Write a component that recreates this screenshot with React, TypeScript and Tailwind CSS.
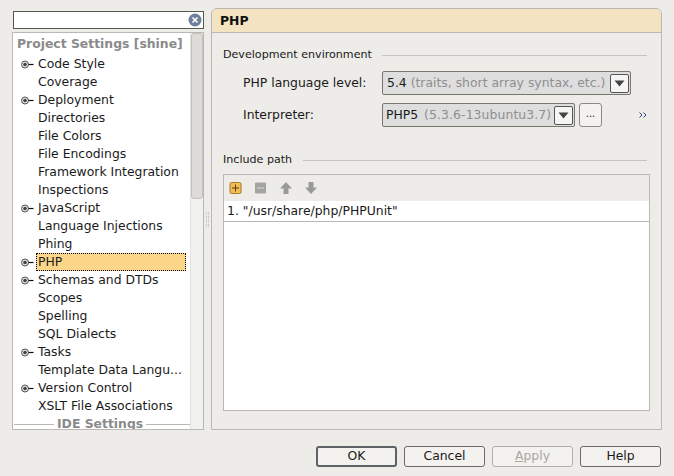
import React from 'react'

const items: [string, boolean][] = [
  ['Code Style', true],
  ['Coverage', false],
  ['Deployment', true],
  ['Directories', false],
  ['File Colors', false],
  ['File Encodings', false],
  ['Framework Integration', false],
  ['Inspections', false],
  ['JavaScript', true],
  ['Language Injections', false],
  ['Phing', false],
  ['PHP', true],
  ['Schemas and DTDs', true],
  ['Scopes', false],
  ['Spelling', false],
  ['SQL Dialects', false],
  ['Tasks', true],
  ['Template Data Langu...', false],
  ['Version Control', true],
  ['XSLT File Associations', false],
]

const Expander = () => (
  <svg width="13" height="9" viewBox="0 0 13 9" className="shrink-0">
    <circle cx="4" cy="4.500" r="3.500" fill="#e0e0dd" stroke="#555" />
    <circle cx="4" cy="4.500" r="1.800" fill="#444" />
    <path d="M7.500 4.500h5" stroke="#111" strokeWidth="1.200" />
  </svg>
)

const Arrow = () => (
  <div className="w-[19px] h-[19px] border border-[#555] rounded-[2px] bg-[#f6f5f3] flex items-center justify-center shrink-0">
    <svg width="11" height="7" viewBox="0 0 11 7">
      <path d="M0.500 0.500h10L5.500 6.500z" fill="#444" />
    </svg>
  </div>
)

const Button = ({ label, cls }: { label: React.ReactNode; cls?: string }) => (
  <div className={`w-[81px] h-[21px] rounded-[3px] border flex items-center justify-center text-[12.4px] bg-[#f3f2ef] ${cls}`}>
    {label}
  </div>
)

export default function App() {
  return (
    <div className="w-[674px] h-[476px] bg-[#edece8] text-[#1a1a1a] overflow-hidden flex flex-col font-['DejaVu_Sans',sans-serif] text-[12.4px]">
      <div className="flex h-[430px] pl-3 pt-2">
        {/* left side */}
        <div className="w-[192px] flex flex-col pt-[3px]">
          <div className="ml-px h-[18px] bg-white border border-[#55554f] flex items-center justify-end pr-px">
            <svg width="14" height="14" viewBox="0 0 14 14">
              <circle cx="7" cy="7" r="6.500" fill="#6c7f9c" />
              <path d="M4.500 4.500l5 5M9.500 4.500l-5 5" stroke="#fff" strokeWidth="1.600" />
            </svg>
          </div>
          <div className="mt-[3px] flex-1 border border-[#b9b8b3] bg-white flex overflow-hidden">
            <div className="flex-1 min-w-0 overflow-hidden">
              <div className="h-[20px] mt-px flex items-center text-[#8a8a8a] font-bold whitespace-nowrap pl-[4px]">
                Project Settings [shine]
              </div>
              <div className="mt-[1px]">
                {items.map(([name, expandable]) => (
                  <div key={name} className="h-[18px] flex items-center relative pl-[25px] whitespace-nowrap">
                    {expandable && (
                      <div className="absolute left-[8px] top-[5px]">
                        <Expander />
                      </div>
                    )}
                    {name === 'PHP' ? (
                      <div className="w-[150px] h-[18px] ml-[-2px] pl-[1px] bg-[#fbd689] border border-dotted border-black flex items-center">
                        PHP
                      </div>
                    ) : (
                      name
                    )}
                  </div>
                ))}
              </div>
              <div className="h-[18px] flex items-center gap-[2px] pl-px text-[#8a8a8a] font-bold whitespace-nowrap">
                <div className="h-px w-[40px] bg-[#b9b8b3] shrink-0" />
                <span className="px-[1px]">IDE Settings</span>
                <div className="h-px flex-1 bg-[#b9b8b3]" />
              </div>
            </div>
            <div className="w-[13px] bg-[#f1f1ef] border-l border-[#e3e2de] flex justify-center shrink-0">
              <div className="w-[12px] h-[166px] rounded-[3px] border border-[#c2c1bc] bg-[#dcdbd7]" />
            </div>
          </div>
        </div>
        {/* splitter grip */}
        <div className="w-[7px] flex items-center justify-center">
          <svg width="3" height="15" viewBox="0 0 3 15">
            <path d="M0.500 0v15M2.500 0v15" stroke="#bdbcb7" strokeDasharray="1 1" />
          </svg>
        </div>
        {/* right panel */}
        <div className="w-[451px] border border-[#b9b8b3] rounded-t-[6px] bg-[#edece8] flex flex-col overflow-hidden">
          <div className="h-[24px] bg-[#f4e3c0] border-b border-[#b9b8b3] flex items-center pl-[8px] pt-px font-bold text-[#111] shrink-0">
            PHP
          </div>
          <div className="flex items-center pl-[11px] pr-[14px] mt-[13px] h-[18px] text-[11.1px]">
            <span>Development environment</span>
            <div className="h-px flex-1 bg-[#c4c3be] ml-[10px]" />
          </div>
          <div className="flex items-center pl-[31px] mt-[7px] h-[24px]">
            <span className="w-[139px]">PHP language level:</span>
            <div className="w-[249px] h-[24px] border border-[#77766f] rounded-[2px] bg-[#dedede] flex items-center pl-[4px] pr-[1px]">
              <span className="flex-1 whitespace-nowrap overflow-hidden">
                5.4 <span className="text-[#8f8f8f]">(traits, short array syntax, etc.)</span>
              </span>
              <Arrow />
            </div>
          </div>
          <div className="flex items-center pl-[31px] mt-[8px] h-[24px]">
            <span className="w-[139px]">Interpreter:</span>
            <div className="w-[193px] h-[24px] border border-[#77766f] rounded-[2px] bg-[#dedede] flex items-center pl-[3px] pr-[1px]">
              <span className="flex-1 whitespace-nowrap overflow-hidden">
                PHP5 <span className="ml-[2px] tracking-[0.1px] text-[#8f8f8f]">(5.3.6-13ubuntu3.7)</span>
              </span>
              <Arrow />
            </div>
            <div className="ml-[4px] w-[23px] h-[24px] border border-[#8a8984] rounded-[3px] bg-[#f3f2ef] flex items-center justify-center pb-[3px] text-[10px] leading-none">
              ...
            </div>
            <svg width="8" height="6" viewBox="0 0 8 6" className="ml-[37px]">
              <path d="M0.500 0.500L3 3 0.500 5.500M4.500 0.500L7 3 4.500 5.500" fill="none" stroke="#2f4672" />
            </svg>
          </div>
          <div className="flex items-center pl-[11px] pr-[14px] mt-[24px] h-[18px] text-[11.1px]">
            <span>Include path</span>
            <div className="h-px flex-1 bg-[#c4c3be] ml-[11px]" />
          </div>
          <div className="mx-[11px] mt-[5px] mb-[18px] flex-1 border border-[#b9b8b3] flex flex-col">
            <div className="h-[26px] flex items-center pl-[5px] gap-[11px]">
              <svg width="14" height="14" viewBox="0 0 14 14">
                <rect x="1" y="1.500" width="11" height="11" rx="1.500" fill="#f2bc56" stroke="#a9782a" />
                <path d="M6.500 3.500v7M3 7h7" stroke="#5b3c0c" />
              </svg>
              <svg width="14" height="14" viewBox="0 0 14 14">
                <rect x="1" y="1.500" width="11" height="11" rx="1" fill="#a3a3a0" />
                <path d="M3 7h7" stroke="#dcdcd9" strokeWidth="1.200" />
              </svg>
              <svg width="14" height="14" viewBox="0 0 14 14">
                <path d="M7 1l6 6.500H9.500V13h-5V7.500H1z" fill="#9a9a97" />
              </svg>
              <svg width="14" height="14" viewBox="0 0 14 14">
                <path d="M7 13L1 6.500H4.500V1h5v5.500H13z" fill="#9a9a97" />
              </svg>
            </div>
            <div className="flex-1 bg-white">
              <div className="h-[21px] border-b border-[#b9b8b3] flex items-center pl-[3px] whitespace-nowrap">
                1. "/usr/share/php/PHPUnit"
              </div>
            </div>
          </div>
        </div>
      </div>
      {/* bottom buttons */}
      <div className="flex justify-end gap-[7px] pr-[13px] mt-[16px]">
        <Button label="OK" cls="border-[2px] border-[#5d6366]" />
        <Button label="Cancel" cls="border-[#6b6a66]" />
        <Button
          label={
            <span className="text-[#a8a7a2]">
              <span className="underline">A</span>pply
            </span>
          }
          cls="border-[#b0afa9] bg-[#edece8]"
        />
        <Button label="Help" cls="border-[#6b6a66]" />
      </div>
    </div>
  )
}
